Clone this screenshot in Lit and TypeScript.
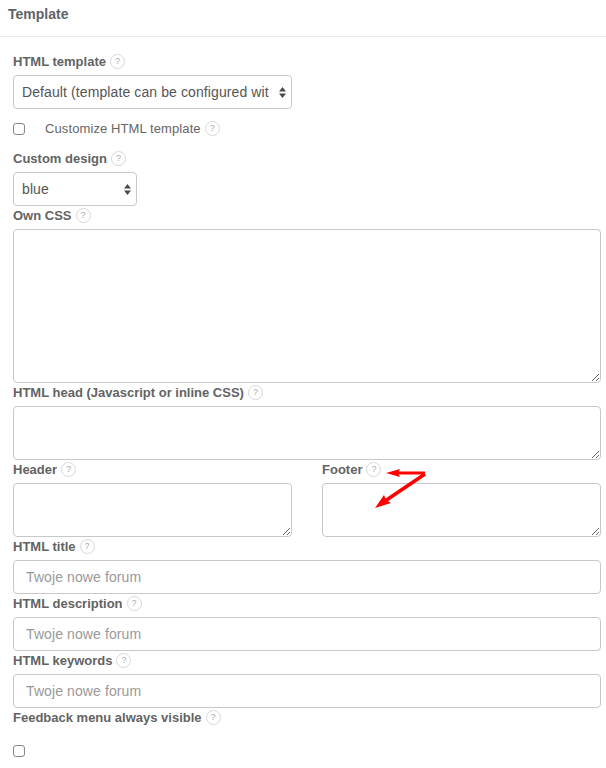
import {LitElement, html, css} from 'lit';
import {customElement} from 'lit/decorators.js';

const hint = html`<span class="hint">?</span>`;

const updown = html`
  <svg class="updown" width="7" height="11" viewBox="0 0 7 11">
    <path d="M3.5 0 L7 4.5 L0 4.5 Z M3.5 11 L0 6.5 L7 6.5 Z" fill="#4a4a4a"></path>
  </svg>`;

@customElement('app-root')
export class AppRoot extends LitElement {

    static override styles = css`
    :host {
      display: block;
      width: 606px;
      height: 768px;
      overflow: hidden;
      position: relative;
      background: #fff;
      font-family: "Liberation Sans", Arial, sans-serif;
      color: #555;
    }

    * {
      box-sizing: border-box;
    }

    .title {
      height: 37px;
      padding: 6px 8px 0;
      font-size: 14px;
      line-height: 16px;
      font-weight: bold;
      color: #5f6368;
      border-bottom: 1px solid #e9ecef;
    }

    .form {
      padding: 15px 5px 0 13px;
    }

    .label {
      display: flex;
      align-items: center;
      gap: 4px;
      height: 23px;
      padding-bottom: 4px;
      font-size: 13px;
      font-weight: bold;
      color: #636363;
    }

    .hint {
      width: 15px;
      height: 15px;
      border: 1px solid #d8d8d8;
      border-radius: 50%;
      font-size: 9px;
      font-weight: normal;
      line-height: 13px;
      text-align: center;
      color: #aaa;
    }

    .select-wrap {
      position: relative;
    }

    .select-wrap.wide {
      width: 279px;
    }

    .select-wrap.narrow {
      width: 124px;
    }

    select, input[type="text"], textarea {
      display: block;
      width: 100%;
      margin: 0;
      background: #fff;
      border: 1px solid #c8c8c8;
      border-radius: 4px;
      font-family: inherit;
      font-size: 14px;
      letter-spacing: 0.1px;
      color: #555;
      outline: none;
    }

    select {
      height: 34px;
      padding: 0 20px 0 8px;
      appearance: none;
    }

    .updown {
      position: absolute;
      right: 6px;
      top: 12px;
    }

    input[type="text"] {
      height: 34px;
      padding: 0 12px;
    }

    input::placeholder {
      color: #999;
      opacity: 1;
    }

    textarea {
      resize: vertical;
      padding: 6px 12px;
    }

    .css-box {
      height: 154px;
    }

    .head-box {
      height: 54px;
    }

    .half-box {
      height: 54px;
    }

    .check-row {
      display: flex;
      align-items: center;
      height: 40px;
      font-size: 13px;
      letter-spacing: 0.1px;
      color: #666;
    }

    .check-row .text {
      margin-left: 20px;
      margin-right: 4px;
      padding-bottom: 2px;
    }

    .check-row .hint {
      margin-bottom: 2px;
      letter-spacing: 0;
    }

    .check {
      width: 12px;
      height: 12px;
      border: 1px solid #888;
      border-radius: 3px;
      background: #fff;
    }

    .plain-check {
      margin-top: 14px;
    }

    .columns {
      display: grid;
      grid-template-columns: 279px 279px;
      column-gap: 30px;
    }

    .arrows {
      position: absolute;
      left: 370px;
      top: 462px;
    }
  `;

    protected override render() {
        return html`
      <div class="title">Template</div>
      <div class="form">
        <div class="label">HTML template ${hint}</div>
        <div class="select-wrap wide">
          <select><option>Default (template can be configured wit</option></select>
          ${updown}
        </div>
        <div class="check-row">
          <span class="check"></span>
          <span class="text">Customize HTML template</span> ${hint}
        </div>
        <div class="label">Custom design ${hint}</div>
        <div class="select-wrap narrow">
          <select><option>blue</option></select>
          ${updown}
        </div>
        <div class="label">Own CSS ${hint}</div>
        <textarea class="css-box"></textarea>
        <div class="label">HTML head (Javascript or inline CSS) ${hint}</div>
        <textarea class="head-box"></textarea>
        <div class="columns">
          <div>
            <div class="label">Header ${hint}</div>
            <textarea class="half-box"></textarea>
          </div>
          <div>
            <div class="label">Footer ${hint}</div>
            <textarea class="half-box"></textarea>
          </div>
        </div>
        <div class="label">HTML title ${hint}</div>
        <input type="text" placeholder="Twoje nowe forum"/>
        <div class="label">HTML description ${hint}</div>
        <input type="text" placeholder="Twoje nowe forum"/>
        <div class="label">HTML keywords ${hint}</div>
        <input type="text" placeholder="Twoje nowe forum"/>
        <div class="label">Feedback menu always visible ${hint}</div>
        <div class="check plain-check"></div>
      </div>
      <svg class="arrows" width="60" height="52" viewBox="370 462 60 52">
        <path d="M425 473 L398 473" stroke="#f00" stroke-width="3" fill="none"></path>
        <path d="M386 473 L400 469 L398 473 L400 477 Z" fill="#f00"></path>
        <path d="M425 474 L385 501" stroke="#f00" stroke-width="3.5" fill="none"></path>
        <path d="M375 508 L384 495 L386 500 L391 503 Z" fill="#f00"></path>
      </svg>
    `;
    }
}

declare global {
    interface HTMLElementTagNameMap {
        'app-root': AppRoot;
    }
}
